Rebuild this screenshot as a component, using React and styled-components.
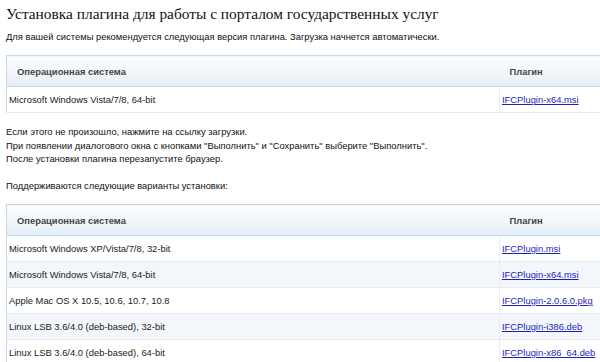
import React from "react";
import styled, { createGlobalStyle } from "styled-components";

const Global = createGlobalStyle`
  html, body { margin: 0; padding: 0; background: #fff; overflow: hidden; }
  body { font-family: "Liberation Sans", Arial, sans-serif; font-size: 9.4px; color: #111; }
  * { box-sizing: border-box; }
`;

const Page = styled.div`
  padding: 4px 0 0 6px;
  width: 600px;
  overflow: hidden;
`;

const Title = styled.h1`
  margin: 0;
  font-family: "Liberation Serif", "Times New Roman", serif;
  font-weight: normal;
  font-size: 15.4px;
  line-height: 20px;
  color: #111;
`;

const Para = styled.p`
  margin: ${(p) => p.$mt || 0}px 0 0 0;
  line-height: 13.4px;
`;

const Table = styled.table`
  border-collapse: collapse;
  width: 640px;
  margin-top: ${(p) => p.$mt}px;
  table-layout: fixed;
`;

const HeadCell = styled.th`
  text-align: left;
  font-weight: bold;
  color: #454545;
  font-size: 9.4px;
  height: 31px;
  padding: 0 10px;
  background: linear-gradient(to bottom, #fbfdfe 0%, #f1f6fb 55%, #e4edf6 100%);
  border-top: 1px solid #c8dae8;
  border-bottom: 1px solid #c8dae8;
  border-left: ${(p) => (p.$first ? "1px solid #c2d7e8" : "none")};
  width: ${(p) => p.$w}px;
`;

const Row = styled.tr`
  background: ${(p) => (p.$alt ? "#f3f7fb" : "#fff")};
`;

const Cell = styled.td`
  height: 26px;
  padding: 0 2px;
  color: #1a1a1a;
  border-bottom: 1px solid #e3ebf2;
  border-left: 1px solid ${(p) => (p.$first ? "#c2d7e8" : "#e6edf3")};
  white-space: nowrap;
`;

const Link = styled.a`
  color: #1f1fb8;
  text-decoration: underline;
`;

const recommended = [["Microsoft Windows Vista/7/8, 64-bit", "IFCPlugin-x64.msi"]];

const variants = [
  ["Microsoft Windows XP/Vista/7/8, 32-bit", "IFCPlugin.msi"],
  ["Microsoft Windows Vista/7/8, 64-bit", "IFCPlugin-x64.msi"],
  ["Apple Mac OS X 10.5, 10.6, 10.7, 10.8", "IFCPlugin-2.0.6.0.pkg"],
  ["Linux LSB 3.6/4.0 (deb-based), 32-bit", "IFCPlugin-i386.deb"],
  ["Linux LSB 3.6/4.0 (deb-based), 64-bit", "IFCPlugin-x86_64.deb"],
];

function PluginTable({ rows, mt }) {
  return (
    <Table $mt={mt}>
      <thead>
        <tr>
          <HeadCell $first $w={493}>Операционная система</HeadCell>
          <HeadCell $w={147}>Плагин</HeadCell>
        </tr>
      </thead>
      <tbody>
        {rows.map(([os, file], i) => (
          <Row key={file} $alt={i % 2 === 1}>
            <Cell $first>{os}</Cell>
            <Cell>
              <Link href="#">{file}</Link>
            </Cell>
          </Row>
        ))}
      </tbody>
    </Table>
  );
}

export default function App() {
  return (
    <Page>
      <Global />
      <Title>Установка плагина для работы с порталом государственных услуг</Title>
      <Para $mt={6}>
        Для вашей системы рекомендуется следующая версия плагина. Загрузка начнется автоматически.
      </Para>
      <PluginTable rows={recommended} mt={12} />
      <Para $mt={12}>
        Если этого не произошло, нажмите на ссылку загрузки.
        <br />
        При появлении диалогового окна с кнопками "Выполнить" и "Сохранить" выберите "Выполнить".
        <br />
        После установки плагина перезапустите браузер.
      </Para>
      <Para $mt={13}>Поддерживаются следующие варианты установки:</Para>
      <PluginTable rows={variants} mt={12} />
    </Page>
  );
}
